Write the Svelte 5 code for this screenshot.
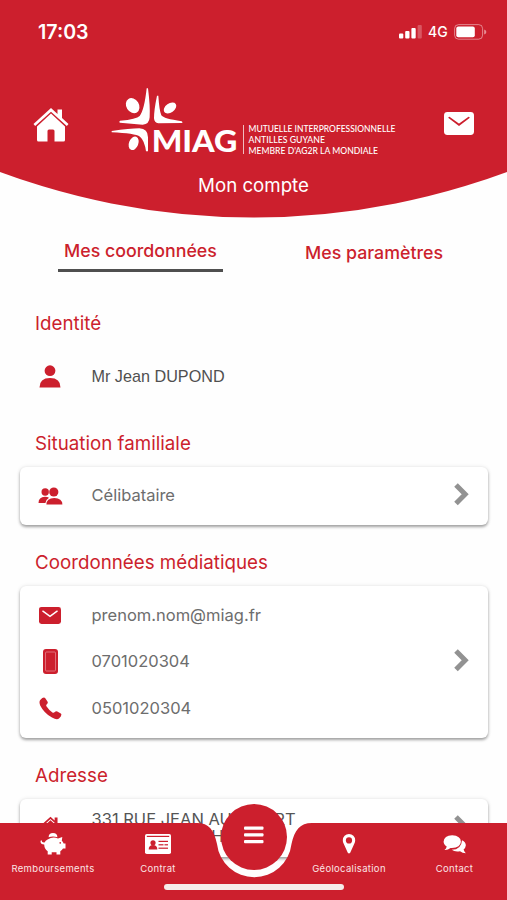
<script lang="ts">
  interface Row {
    icon: string;
    lines: string[];
    variant?: string;
  }

  interface Section {
    title: string;
    card: boolean;
    rows: Row[];
  }

  const sections: Section[] = [
    {
      title: "Identité",
      card: false,
      rows: [{ icon: "person", lines: ["Mr Jean DUPOND"], variant: "name" }],
    },
    {
      title: "Situation familiale",
      card: true,
      rows: [{ icon: "people", lines: ["Célibataire"] }],
    },
    {
      title: "Coordonnées médiatiques",
      card: true,
      rows: [
        { icon: "mail", lines: ["prenom.nom@miag.fr"] },
        { icon: "mobile", lines: ["0701020304"] },
        { icon: "phone", lines: ["0501020304"] },
      ],
    },
    {
      title: "Adresse",
      card: true,
      rows: [{ icon: "home", lines: ["331 RUE JEAN AUDEBERT", "97260 MORNE HAUT"], variant: "address" }],
    },
  ];

  const tabs = ["Mes coordonnées", "Mes paramètres"];
  let activeTab = $state(0);
</script>

{#snippet house(size: number)}
  <svg width={size} height={size} viewBox="0 0 36 36" fill="currentColor">
    <path d="M18 1 L24.5 7 V2.5 H29 V11 L35.5 17 L33.8 19 L18 4.8 L2.2 19 L.5 17 Z" />
    <path d="M18 6.6 L32 19.4 V33 Q32 34.5 30.5 34.5 H21.5 V24 Q21.5 22.5 20 22.5 H16 Q14.5 22.5 14.5 24 V34.5 H5.5 Q4 34.5 4 33 V19.4 Z" />
  </svg>
{/snippet}

{#snippet envelope(width: number, height: number)}
  <svg {width} {height} viewBox="0 0 30 23">
    <rect width="30" height="23" rx="3.4" fill="currentColor" />
    <path class="flap" d="M5.3 5.6 L15 12.8 L24.7 5.6" />
  </svg>
{/snippet}

<div class="screen">
  <header class="header">
    <div class="status-bar">
      <span class="time">17:03</span>
      <div class="indicators">
        <svg width="23" height="15" viewBox="0 0 23 15" fill="#fff">
          <rect x="0" y="9.5" width="4.3" height="5" rx="1" />
          <rect x="6.2" y="7" width="4.3" height="7.5" rx="1" />
          <rect x="12.4" y="4" width="4.3" height="10.5" rx="1" />
          <rect x="18.6" y="1" width="4.2" height="13.5" rx="1" opacity=".25" />
        </svg>
        <span class="network">4G</span>
        <svg width="33" height="16" viewBox="0 0 33 16">
          <rect x=".6" y=".6" width="28" height="14.6" rx="4" fill="none" stroke="#fff" stroke-opacity=".45" />
          <rect x="2.3" y="2.5" width="18.5" height="10.8" rx="2" fill="#fff" />
          <path d="M30.2 5.5 Q32.4 6.2 32.4 8 T30.2 10.5Z" fill="#fff" opacity=".5" />
        </svg>
      </div>
    </div>

    <div class="brand-bar">
      <button class="home-button" aria-label="Accueil">{@render house(36)}</button>
      <svg class="logo" width="292" height="74" viewBox="0 0 292 74" fill="#fff">
        <g transform="translate(-90 -4) scale(.33333)">
          <ellipse cx="338" cy="77" rx="19" ry="24" transform="rotate(-32 338 77)" />
          <path d="M380 25 H384 Q391 80 389 112 Q388 133 368 134 L300 128 Q295 126 300 122 Q350 118 359 108 Q373 90 380 25Z" />
          <path d="M411 47 H415 Q418 92 424 106 Q430 116 485 124 Q490 127 486 129 L415 130 Q403 128 402 115 Q402 90 411 47Z" />
          <ellipse cx="450" cy="84" rx="21" ry="13.5" transform="rotate(-35 450 84)" />
          <path d="M275 153 Q330 145 358 145 Q384 146 384 172 V214 H378 Q374 182 360 170 Q345 160 275 157Z" />
          <ellipse cx="341" cy="190" rx="14" ry="21" transform="rotate(22 341 190)" />
          <text class="logo-name" x="395" y="215" textLength="257" lengthAdjust="spacingAndGlyphs">MIAG</text>
        </g>
        <rect x="133" y="41" width="1" height="29" opacity=".7" />
        <g class="logo-tagline">
          <text x="138.5" y="48.3" textLength="147" lengthAdjust="spacingAndGlyphs">MUTUELLE INTERPROFESSIONNELLE</text>
          <text x="138.5" y="59.3" textLength="76.5" lengthAdjust="spacingAndGlyphs">ANTILLES GUYANE</text>
          <text x="138.5" y="70.3" textLength="129.5" lengthAdjust="spacingAndGlyphs">MEMBRE D'AG2R LA MONDIALE</text>
        </g>
      </svg>
      <button class="mail-button" aria-label="Messages">{@render envelope(30, 23)}</button>
    </div>

    <h1>Mon compte</h1>
  </header>

  <div class="tabs">
    {#each tabs as tab, i}
      <button class="tab" class:active={activeTab === i} onclick={() => (activeTab = i)}>{tab}</button>
    {/each}
  </div>

  <main>
    {#each sections as section}
      <section>
        <h2>{section.title}</h2>
        <div class="block" class:card={section.card}>
          <div class="rows">
            {#each section.rows as row}
              <div class="row">
                <span class="row-icon">
                  {#if row.icon === "person"}
                    <svg width="22" height="23" viewBox="0 0 22 23" fill="currentColor">
                      <circle cx="11" cy="5.7" r="5.4" />
                      <path d="M.5 22.5 Q.5 13 11 13 T21.5 22.5Z" />
                    </svg>
                  {:else if row.icon === "people"}
                    <svg width="25" height="18" viewBox="0 0 25 18" fill="currentColor">
                      <circle cx="7.2" cy="5" r="3.7" />
                      <path d="M.5 16 Q.5 10 7 9.8 Q9.6 9.8 11 10.8 Q8 12.6 7.4 16Z" />
                      <circle cx="15.8" cy="5" r="4.6" />
                      <path d="M8.4 17.6 Q8.4 11 16.3 11 T24.4 17.6Z" />
                    </svg>
                  {:else if row.icon === "mail"}
                    {@render envelope(22, 17)}
                  {:else if row.icon === "mobile"}
                    <svg width="15" height="25" viewBox="0 0 15 25">
                      <rect width="15" height="25" rx="3" fill="currentColor" />
                      <rect x="2.5" y="3" width="10" height="19" rx="1" fill="none" stroke="#f0a5ab" stroke-width=".6" />
                    </svg>
                  {:else if row.icon === "phone"}
                    <svg width="23" height="23" viewBox="0 0 23 23" fill="currentColor">
                      <path d="M1.2 3 Q4.6 -.6 6.3 1.2 L8.6 4.8 Q9.3 6 7.6 7.6 Q6.8 8.4 7.6 9.6 Q9.8 13 13.4 15.4 Q14.6 16.2 15.5 15.3 Q17 13.8 18.3 14.5 L21.8 16.6 Q23.6 18 20 21.6 Q17.8 23.4 13 20.6 Q5 16 1.2 8.4 Q-.2 5 1.2 3Z" />
                    </svg>
                  {:else}
                    {@render house(23)}
                  {/if}
                </span>
                <span class="row-text {row.variant ?? ''}">
                  {#each row.lines as line}
                    <span>{line}</span>
                  {/each}
                </span>
              </div>
            {/each}
          </div>
          {#if section.card}
            <svg class="chevron" width="15" height="23" viewBox="0 0 15 23">
              <path d="M2 2 L11.2 11.3 L2 20.6" />
            </svg>
          {/if}
        </div>
      </section>
    {/each}
  </main>

  <nav class="bottom-nav">
    <svg class="nav-shape" width="507" height="77" viewBox="0 0 507 77">
      <path d="M0 0 H197 C209 0 214 7 217 21 A37.5 37.5 0 0 0 291.5 21 C294.5 7 300 0 312 0 H507 V77 H0Z" />
    </svg>

    <div class="nav-items">
      <a href="#remboursements">
        <svg width="26" height="24" viewBox="0 0 26 24" fill="#fff">
          <path d="M8.6 5.2 Q8.8 1 13 1 T17.4 5.2 Q13 3.8 8.6 5.2Z" />
          <path d="M7.6 7.4 Q13 4.2 18 6.5 L22.3 5 L21.8 8.8 Q23.2 10 23.6 11.5 H25.5 V16.5 H23 Q22 18.3 20.3 19.3 V22.5 H16.5 V20.3 H11.7 V22.5 H7.7 V19.3 Q4.4 17 4.2 12.5 Q.5 12.5 .5 9.5 Q.5 8.2 1.6 8.2 Q1.8 10.9 4.5 10.5 Q5.5 8.5 7.6 7.4Z" />
          <circle cx="20.2" cy="10.9" r=".8" fill="#cc1f2d" />
        </svg>
        Remboursements
      </a>
      <a href="#contrat">
        <svg width="26" height="24" viewBox="0 0 26 24">
          <rect y="2" width="26" height="20" rx="1.8" fill="#fff" />
          <g fill="#cc1f2d">
            <rect x="1.8" y="3.8" width="22.4" height="1.2" />
            <circle cx="8" cy="10.8" r="2.6" />
            <path d="M3.7 17.5 Q3.7 13 8 13 T12.3 17.5Z" />
            <rect x="13.5" y="8.8" width="9.5" height="1.2" />
            <rect x="13.5" y="12.2" width="5" height="1.2" />
            <rect x="19.5" y="12.2" width="3.5" height="1.2" />
            <rect x="13.5" y="15.6" width="9.5" height="1.2" />
          </g>
        </svg>
        Contrat
      </a>
      <button class="menu-button" aria-label="Menu">
        <svg width="20" height="18" viewBox="0 0 20 18" fill="#fff">
          <rect y=".5" width="19.5" height="3.3" rx="1" />
          <rect y="7.2" width="19.5" height="3.3" rx="1" />
          <rect y="13.9" width="19.5" height="3.3" rx="1" />
        </svg>
      </button>
      <a href="#geolocalisation">
        <svg width="14" height="24" viewBox="0 0 14 24">
          <path d="M7 2 A6.2 6.2 0 0 1 13.2 8.3 Q13.2 10 12.4 11.6 L8.2 20.7 Q7 22.2 5.8 20.7 L1.6 11.6 Q.8 10 .8 8.3 A6.2 6.2 0 0 1 7 2Z" fill="#fff" />
          <circle cx="7" cy="8.4" r="3.1" fill="#cc1f2d" />
        </svg>
        Géolocalisation
      </a>
      <a href="#contact">
        <svg width="24" height="24" viewBox="0 0 24 24" fill="#fff">
          <path d="M19 8.2 Q23 10 22.8 13.6 Q22.6 16 20.6 17.5 Q21.2 19.5 22.8 21.3 Q19.5 21.3 17 19.2 Q12 20.2 8.7 17.8 Q18.5 17.6 19 8.2Z" />
          <path d="M9.2 3.3 Q17.8 3.8 17.9 9.8 Q17.5 16.4 7.5 15.9 Q4.8 18.3 1.5 18 Q3.4 16.5 3.7 14.5 Q.6 12.7 .6 9.6 Q1 3.6 9.2 3.3Z" />
        </svg>
        Contact
      </a>
    </div>

    <div class="home-indicator"></div>
  </nav>
</div>

<style>
  :global(body) {
    margin: 0;
    background: #fefefe;
  }

  .screen {
    --red: #cc1f2d;
    position: relative;
    width: 507px;
    height: 900px;
    overflow: hidden;
    background: #fefefe;
    color: #6d6d6d;
    font-family: Inter, "Liberation Sans", sans-serif;
  }

  button {
    padding: 0;
    border: none;
    background: none;
    color: inherit;
    font: inherit;
    cursor: pointer;
  }

  svg {
    display: block;
    flex: none;
  }

  /* Header */
  .header {
    height: 218px;
    background: var(--red);
    clip-path: circle(729px at 50% -511.5px);
    color: #fff;
  }

  .status-bar {
    display: flex;
    justify-content: space-between;
    align-items: center;
    height: 63px;
    padding: 0 20px 0 38px;
  }

  .time {
    font-size: 19.6px;
    font-weight: 600;
  }

  .indicators {
    display: flex;
    align-items: center;
    gap: 6px;
  }

  .network {
    width: 20px;
    font-size: 14px;
    font-weight: 500;
  }

  .brand-bar {
    display: flex;
    align-items: center;
    justify-content: space-between;
    height: 74px;
    margin-bottom: 13px;
    padding: 21px 33px 0;
  }

  .home-button {
    padding-top: 7px;
  }

  .mail-button {
    padding-top: 5px;
  }

  .logo {
    margin-left: -1px;
  }

  .logo-name {
    font-family: Lato, sans-serif;
    font-size: 92px;
    font-weight: 900;
  }

  .logo-tagline {
    font-family: Lato, sans-serif;
    font-size: 8.6px;
    font-weight: 500;
  }

  h1 {
    margin: 0;
    font-size: 18.7px;
    font-weight: 400;
    line-height: 30px;
    text-align: center;
  }

  .flap {
    fill: none;
    stroke: var(--red);
    stroke-width: 1.8;
    stroke-linecap: round;
  }

  /* Tabs */
  .tabs {
    display: flex;
    align-items: flex-start;
    justify-content: space-between;
    height: 48px;
    padding: 20px 58px 0;
  }

  .tab {
    height: 34px;
    padding: 0 6px 6px;
    box-sizing: border-box;
    border-bottom: 3px solid transparent;
    color: var(--red);
    font-size: 17.8px;
    font-weight: 500;
    white-space: nowrap;
  }

  .tab + .tab {
    padding-bottom: 3px;
  }

  .tab.active {
    border-bottom-color: #4f4f4f;
  }

  /* Sections */
  main {
    padding: 0 19px 0 20px;
  }

  h2 {
    height: 61px;
    margin: 0;
    padding: 26px 0 0 15px;
    box-sizing: border-box;
    color: var(--red);
    font-size: 18.75px;
    font-weight: 400;
    line-height: 24px;
  }

  .block {
    display: flex;
    align-items: center;
    justify-content: space-between;
    padding: 6px 19px 6px 16px;
  }

  .card {
    border-radius: 6px;
    background: #fff;
    box-shadow: 0 2px 3px rgba(0, 0, 0, 0.34), 0 0 4px rgba(0, 0, 0, 0.1);
  }

  .row {
    display: flex;
    align-items: center;
    height: 46.5px;
  }

  .row-icon {
    display: flex;
    justify-content: center;
    width: 28px;
    margin-right: 27.5px;
    color: var(--red);
  }

  .row-icon .flap {
    stroke: #fff;
    stroke-width: 2;
  }

  .row-text {
    display: flex;
    flex-direction: column;
    font-size: 16.5px;
    line-height: 17px;
    white-space: nowrap;
  }

  .row-text.name {
    color: #505050;
    font-family: "Liberation Sans", Arial, sans-serif;
    font-size: 16.2px;
  }

  .row-text.address {
    color: #555;
  }

  .chevron {
    margin-bottom: 3px;
  }

  .chevron path {
    fill: none;
    stroke: #929292;
    stroke-width: 5;
  }

  /* Bottom navigation */
  .bottom-nav {
    position: absolute;
    left: 0;
    bottom: 0;
    width: 507px;
    height: 77px;
    color: #fbe4e5;
  }

  .nav-shape {
    position: absolute;
    inset: 0;
    fill: var(--red);
  }

  .nav-items {
    position: relative;
    display: grid;
    grid-template-columns: 106px 104px 88px 102px 109px;
  }

  .nav-items a {
    display: flex;
    flex-direction: column;
    align-items: center;
    gap: 6px;
    padding-top: 9px;
    color: inherit;
    font-size: 9.5px;
    letter-spacing: 0.32px;
    line-height: 14px;
    text-decoration: none;
  }

  .menu-button {
    display: flex;
    align-items: center;
    justify-content: center;
    justify-self: center;
    width: 66px;
    height: 66px;
    margin-top: -19px;
    padding-bottom: 5px;
    box-sizing: border-box;
    border-radius: 50%;
    background: var(--red);
  }

  .home-indicator {
    position: relative;
    width: 180px;
    height: 6px;
    margin: 8px auto 0;
    border-radius: 3px;
    background: #f6ecea;
  }
</style>
